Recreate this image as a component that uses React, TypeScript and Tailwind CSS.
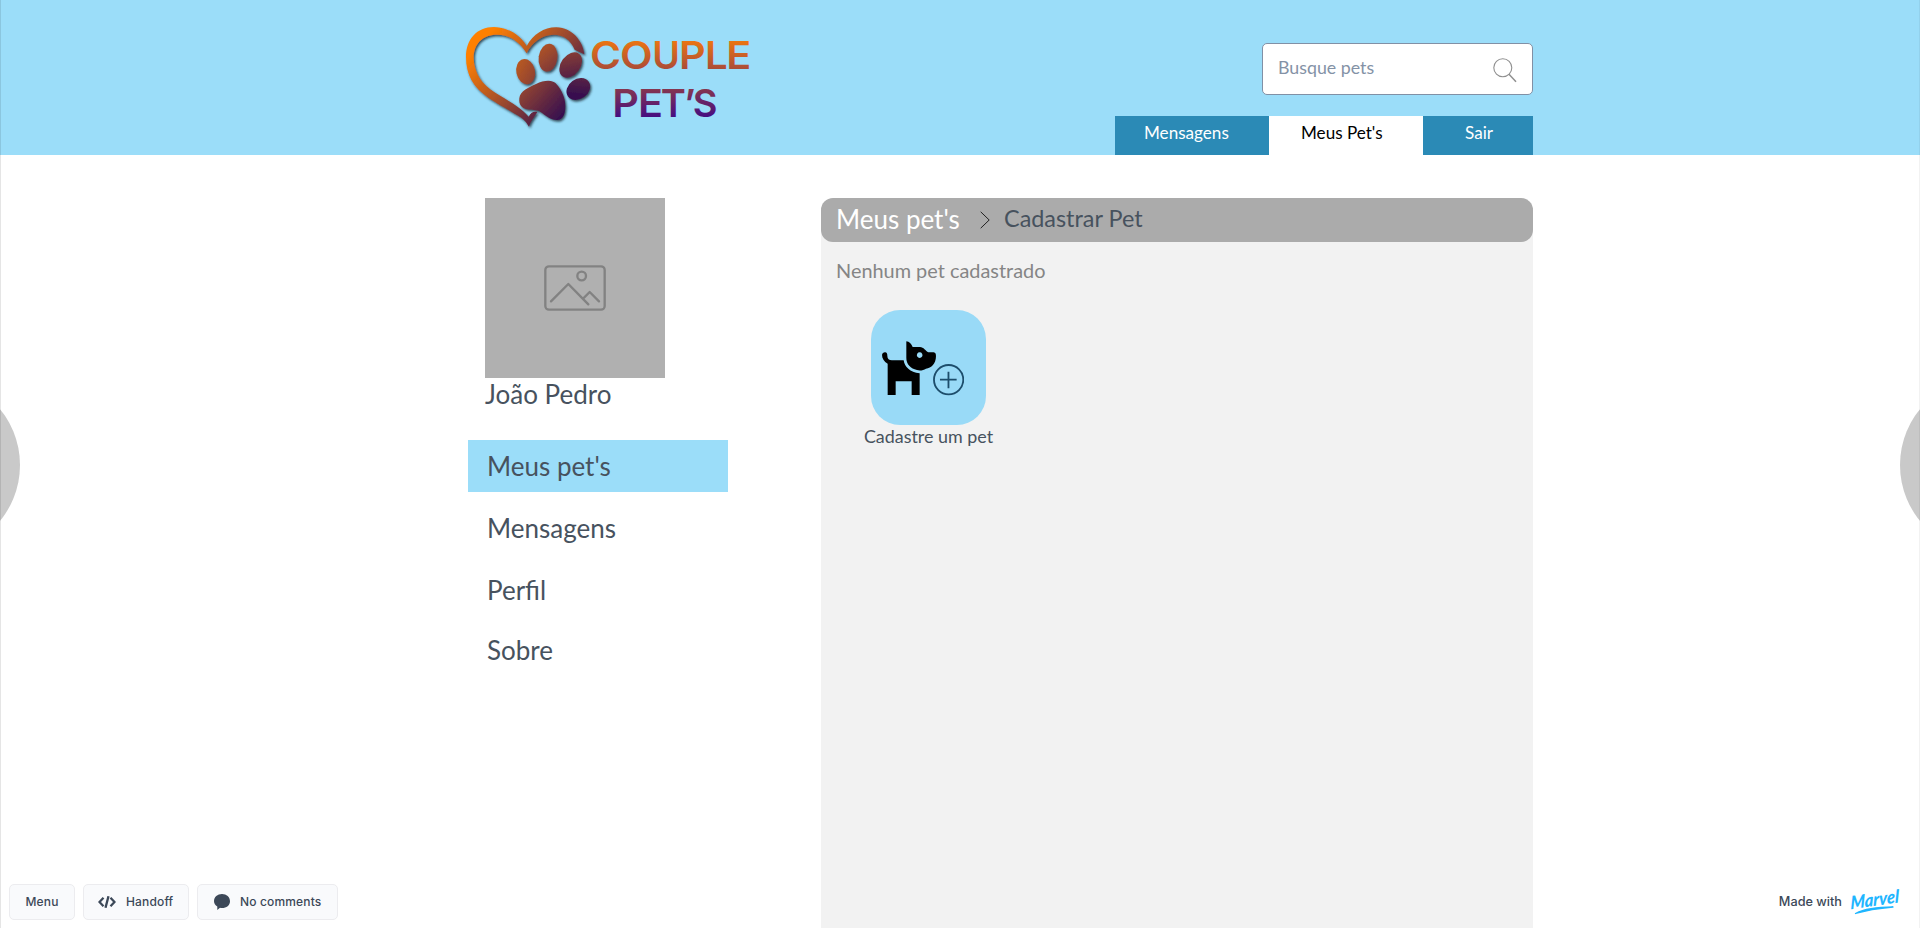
import React from "react";

function Logo() {
  return (
    <svg viewBox="51 0 909 390" className="mt-[10px] h-[130px] w-[303px] overflow-visible" role="img" aria-label="Couple Pet's">
      <defs>
        <linearGradient id="mark" gradientUnits="userSpaceOnUse" x1="100" y1="90" x2="340" y2="310">
          <stop offset="0" stopColor="#ff8000" />
          <stop offset="0.5" stopColor="#a14c2c" />
          <stop offset="1" stopColor="#38104f" />
        </linearGradient>
        <linearGradient id="couple" gradientUnits="userSpaceOnUse" x1="0" y1="95" x2="0" y2="178">
          <stop offset="0" stopColor="#ea7413" />
          <stop offset="1" stopColor="#aa4b38" />
        </linearGradient>
        <linearGradient id="pets" gradientUnits="userSpaceOnUse" x1="0" y1="237" x2="0" y2="320">
          <stop offset="0" stopColor="#853650" />
          <stop offset="1" stopColor="#460e80" />
        </linearGradient>
        <filter id="shade" x="-10%" y="-10%" width="120%" height="120%">
          <feDropShadow dx="4" dy="5" stdDeviation="3" floodColor="#16262e" floodOpacity="0.8" />
        </filter>
      </defs>
      <g fill="url(#mark)" filter="url(#shade)">
        <path d="M237 350C228 335 220 326 205 317C180 302 140 280 115 263C70 232 48 195 48 142C48 88 80 51 132 51C172 52 211 74 230 108C250 72 284 51 320 52C366 54 398 92 403 133L374 119C362 88 336 73 310 74C275 75 245 98 230 130C207 91 172 73 140 74C95 74 70 105 71 145C72 190 97 225 137 249C173 271 213 294 236 320C242 309 248 304 262 306C254 320 243 331 237 350Z" />
        <ellipse cx="227" cy="185" rx="28" ry="38" transform="rotate(-12 227 185)" />
        <ellipse cx="294" cy="143" rx="28" ry="42" transform="rotate(8 294 143)" />
        <ellipse cx="362" cy="165" rx="29" ry="42" transform="rotate(36 362 165)" />
        <ellipse cx="385" cy="237" rx="30" ry="38" transform="rotate(54 385 237)" />
        <path d="M208 265C210 244 235 232 258 222C284 210 308 208 321 224C334 240 346 262 346 288C346 312 340 329 322 330C303 331 290 318 272 306C258 298 247 301 232 298C215 295 206 284 208 265Z" />
      </g>
      <g fontFamily="Inter, sans-serif" fontWeight="600" fontSize="114">
        <text fill="url(#couple)" y="178">
          <tspan x="420" textLength="93" lengthAdjust="spacingAndGlyphs">C</tspan>
          <tspan x="510" textLength="98" lengthAdjust="spacingAndGlyphs">O</tspan>
          <tspan x="607" textLength="83" lengthAdjust="spacingAndGlyphs">U</tspan>
          <tspan x="687" textLength="80" lengthAdjust="spacingAndGlyphs">P</tspan>
          <tspan x="765" textLength="68" lengthAdjust="spacingAndGlyphs">L</tspan>
          <tspan x="829" textLength="75" lengthAdjust="spacingAndGlyphs">E</tspan>
        </text>
        <text fill="url(#pets)" y="320">
          <tspan x="487" textLength="80" lengthAdjust="spacingAndGlyphs">P</tspan>
          <tspan x="564" textLength="75" lengthAdjust="spacingAndGlyphs">E</tspan>
          <tspan x="632">T</tspan>
          <tspan x="703">’</tspan>
          <tspan x="728">S</tspan>
        </text>
      </g>
    </svg>
  );
}

function SearchIcon() {
  return (
    <svg viewBox="0 0 24 25" className="h-[25px] w-6" fill="none" stroke="#8f8f8f" strokeWidth="1.1">
      <circle cx="9.8" cy="9.8" r="9" />
      <path d="M16 16.2L23 23.8" strokeWidth="1.5" />
    </svg>
  );
}

function PictureIcon() {
  return (
    <svg viewBox="252 255 186 138" className="h-[46px] w-[62px]" fill="none" stroke="#828282" strokeWidth="7" strokeLinecap="round" strokeLinejoin="round">
      <rect x="256" y="259" width="178" height="130" rx="11" />
      <circle cx="365" cy="288" r="13" />
      <path d="M273 364L325 312L385 373M370 355L389 336L417 364" />
    </svg>
  );
}

function DogIcon() {
  return (
    <svg viewBox="216 467 247 165" className="h-[55px] w-[82.3px]">
      <path d="M224 501C230 500 232 505 232 511C232 520 237 525 246 525H281C284 545 300 561 329 564V629H305V588H257V629H233V535C222 529 216 519 216 508Q217 502 224 501Z" />
      <path fillRule="evenodd" d="M289 468C298 469 304 475 308 485H330C341 485 347 497 355 501H371C377 502 378 506 378 513C378 535 364 549 348 550C340 555 330 557 321 554C302 550 289 537 289 518ZM329 501a8.500 8.500 0 1 0 0.100 0Z" />
      <g fill="none" stroke="#1d4d6b" strokeWidth="5.5">
        <circle cx="416" cy="583" r="44" />
        <path d="M390 583H440M415.500 559V609" />
      </g>
    </svg>
  );
}

function MarvelLogo() {
  return (
    <svg viewBox="0 0 51 24" className="h-6 w-[51px] overflow-visible">
      <g transform="translate(0 2) rotate(-8 2 18) skewX(-8)">
        <text x="3" y="17" textLength="49" lengthAdjust="spacingAndGlyphs" fontFamily="Lato, sans-serif" fontWeight="900" fontStyle="italic" fontSize="18" fill="#1fb6ff">Marvel</text>
      </g>
      <path d="M5.500 23.500Q18 17 43 17Q20 19 5.500 23.500Z" fill="#1fb6ff" stroke="#1fb6ff" strokeWidth="1.300" strokeLinejoin="round" />
    </svg>
  );
}

const toolButton =
  "flex h-9 items-center rounded-[5px] border border-[#ececef] bg-[#f9fafc] font-['Inter',sans-serif] text-[12px] font-medium tracking-[0.15px] text-[#3c4858]";

export default function App() {
  return (
    <div className="relative flex h-[928px] w-full flex-col overflow-hidden bg-white font-['Lato',sans-serif] text-[#47525e]">
      <header className="flex h-[155px] shrink-0 bg-[#9bddf9] pl-[467px]">
        <div className="flex w-[1066px] justify-between">
          <Logo />
          <div className="flex flex-col items-end">
            <div className="mt-[43px] flex h-[52px] w-[271px] justify-between rounded-[5px] border border-[#8190a5] bg-white pl-[15px] pr-[15px]">
              <span className="mt-[11px] text-[17.8px] leading-[24px] text-[#8492a6]">Busque pets</span>
              <span className="mt-[14px]"><SearchIcon /></span>
            </div>
            <nav className="mt-[21px] flex h-[39px] text-[17.1px] leading-[24px] text-white">
              <a className="w-[154px] bg-[#2b8ab6] pl-[29px] pt-[5px]">Mensagens</a>
              <a className="w-[154px] bg-white pl-[32px] pt-[5px] text-black">Meus Pet's</a>
              <a className="w-[110px] bg-[#2b8ab6] pl-[42px] pt-[5px]">Sair</a>
            </nav>
          </div>
        </div>
      </header>

      <main className="flex min-h-0 flex-1 pl-[468px]">
        <aside className="w-[353px] pt-[43px] text-[26px] leading-8">
          <div className="ml-[17px] flex h-[180px] w-[180px] items-center justify-center bg-[#b0b0b0]">
            <PictureIcon />
          </div>
          <p className="ml-[17px] h-[62px]">João Pedro</p>
          <nav className="flex w-[260px] flex-col">
            <a className="h-[52px] bg-[#9bddf9] pl-[19px] pt-[10px]">Meus pet's</a>
            <a className="h-[62px] pl-[19px] pt-[20px]">Mensagens</a>
            <a className="h-[61px] pl-[19px] pt-[20px]">Perfil</a>
            <a className="h-[61px] pl-[19px] pt-[19px]">Sobre</a>
          </nav>
        </aside>

        <section className="mt-[43px] w-[712px] bg-[linear-gradient(#ffffff_20px,#f2f2f2_20px)]">
          <div className="flex h-[44px] rounded-xl bg-[#ababab] pl-[15px]">
            <span className="mt-[5px] w-[144px] text-[26px] leading-8 text-white">Meus pet's</span>
            <svg viewBox="0 0 10 18" className="mt-[13px] h-[18px] w-[10px]" fill="none" stroke="#222" strokeWidth="1">
              <path d="M.7.800L9.200 9L.7 17.200" />
            </svg>
            <span className="ml-[14px] mt-[5px] text-[23.4px] leading-[30px]">Cadastrar Pet</span>
          </div>
          <p className="pl-[15px] pt-[14px] text-[19.9px] leading-7 text-[#858585]">Nenhum pet cadastrado</p>
          <div className="ml-[42px] mt-[26px] flex w-[131px] flex-col items-center">
            <div className="-ml-px flex h-[115px] w-[115px] shrink-0 rounded-[29px] bg-[#99daf7] pl-[11px] pt-[31px]">
              <DogIcon />
            </div>
            <span className="whitespace-nowrap text-[17.9px] leading-[22px]">Cadastre um pet</span>
          </div>
        </section>
      </main>

      <footer className="absolute bottom-2 left-[9px] right-[19px] flex items-center justify-between">
        <div className="flex gap-2">
          <button className={toolButton + " w-[66px] justify-center"}>Menu</button>
          <button className={toolButton + " w-[106px] pl-[14px]"}>
            <svg viewBox="0 0 18 12" className="mr-[10px] h-3 w-[18px]" fill="none" stroke="#3c4858" strokeWidth="2.3">
              <path d="M5.500 1.800L1.500 6L5.500 10.200M12.500 1.800L16.500 6L12.500 10.200M10.500.2L7.500 11.800" />
            </svg>
            Handoff
          </button>
          <button className={toolButton + " w-[141px] pl-[16px]"}>
            <svg viewBox="0 0 16 16" className="mr-[10px] h-4 w-4" fill="#3c4858">
              <path d="M8 0C12.500 0 16 3 16 7.200S12.500 14 8 14Q6.800 14 6 13.700L3.300 16V12.500C1.300 11.200 0 9.400 0 7.200C0 3 3.500 0 8 0Z" />
            </svg>
            No comments
          </button>
        </div>
        <div className="flex items-center gap-[8px] font-['Inter',sans-serif] text-[12.7px] font-medium text-[#3c4858]">
          Made with
          <MarvelLogo />
        </div>
      </footer>

      <div className="absolute left-[-156px] top-[377px] h-[176px] w-[176px] rounded-full bg-[#c9c9c9]" />
      <div className="absolute right-[-156px] top-[377px] h-[176px] w-[176px] rounded-full bg-[#c9c9c9]" />
      <div className="absolute inset-y-0 left-0 w-px bg-black/10" />
      <div className="absolute inset-y-0 right-0 w-px bg-black/5" />
    </div>
  );
}
